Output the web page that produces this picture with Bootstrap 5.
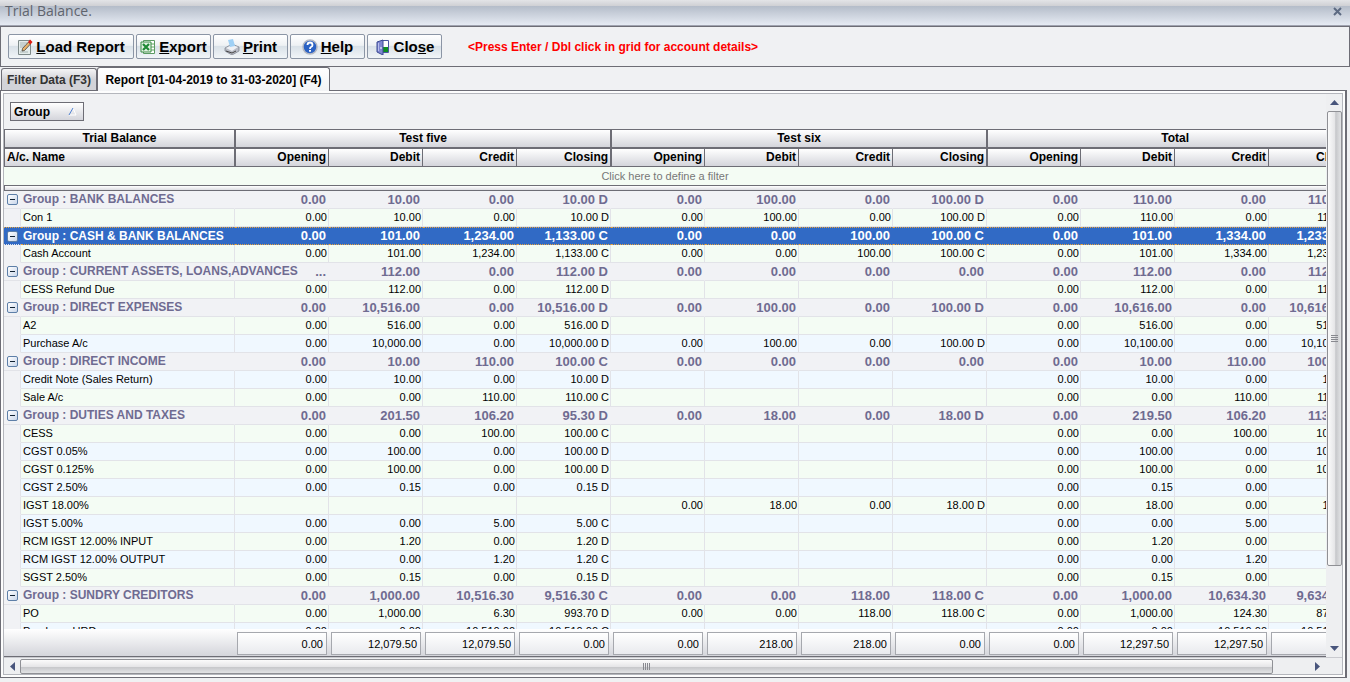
<!DOCTYPE html>
<html lang="en">
<head>
<meta charset="utf-8">
<meta name="viewport" content="width=device-width, initial-scale=1">
<title>Trial Balance</title>
<link rel="stylesheet" href="https://cdn.jsdelivr.net/npm/bootstrap@5.3.0/dist/css/bootstrap.min.css">
<style>
:root{--line:#6d6d75;--face:#f0f1f3;--soft:#e2e3e8}
body{background:var(--face);color:#000;font:12px/18px "Liberation Sans",Arial,sans-serif}
button{color:inherit;font:inherit}
.titlebar{height:26px;background:linear-gradient(#e3e4e7 0,#cfd0d4 6px,#b4bcc9 6px,#e6ebf3 25px,#a0a3b0 25px);color:#5f646e;padding-left:5px}
.titlebar h1{font:14px/22px "Open Sans","Noto Sans",sans-serif;margin:0}
.win-close{border:0;background:none}
.toolbar{height:41px;border:1px solid var(--line);gap:2px;padding:0 7px}
.tool{height:25px;border:1px solid #8b95a5;border-radius:2px;background:linear-gradient(#fff,#eef1f4 45%,#d9e1e8 50%,#f1f5f8);font-weight:700;font-size:15px;line-height:18px;padding:0 4px;gap:3px;white-space:nowrap}
.tool svg{width:16px;height:16px;flex:none}
.t1{width:126px}.t2{width:75px}
.hint{color:#f00;font-weight:700}
.tabs{height:23px;padding-left:1px;position:relative;z-index:1}
.tab-btn{border:1px solid var(--line);border-bottom:0;border-radius:3px 3px 0 0;font-weight:700;white-space:nowrap;padding:0 4px}
.tab-off{height:22px;background:linear-gradient(#f4f4f5,#d2d3d8 50%,#d2d3d8);color:#333;width:96px}
.tab-on{height:24px;background:linear-gradient(#fff,#f2f3f5);margin-bottom:-1px;width:233px}
.frame{min-height:0;border:1px solid var(--line);border-right-width:2px;margin:0 3px 4px 0;padding:2px;background:#fdfdfd}
.inner{border:1px solid #b4b6bc;background:var(--face)}
.groupbar{height:35px;padding:8px 6px}
.chip{width:74px;height:19px;border:1px solid var(--line);background:linear-gradient(#fff,#d4d5db);font-weight:700;padding:0 6px 0 3px}
.tgrid{table-layout:fixed;border-collapse:separate;border-spacing:0;width:1359px}
.tgrid td,.tgrid th{padding:0 2px;white-space:nowrap;text-align:right;line-height:17px;height:18px}
.tgrid tbody td{font-size:11px;padding-right:1px}
.ind{width:17px}.nm{width:214px}.num{width:94px}
.tgrid thead th{border-bottom:1px solid var(--line);border-right:1px solid var(--line);background:linear-gradient(#fff,#d4d5db);font-weight:700}
.tgrid thead tr:first-child th{border-top:1px solid var(--line);border-bottom-width:2px;height:20px;text-align:center}
.tgrid thead th:first-child,.tgrid thead .edge+th{border-left:1px solid var(--line)}
.tgrid thead .lft{text-align:left}
.filterline{height:18px;background:#f4fcf4;color:#777;border:0;font-size:11px}
.split{height:6px;border:1px solid var(--line);border-right:0;background:linear-gradient(#fff,#dcdde2)}
.tgrid tbody td{border-bottom:1px solid var(--soft);border-right:1px solid var(--soft)}
.tgrid tbody td:nth-child(2),.tgrid tbody td:first-child{text-align:left}
.odd td{background:#f4fcf4}.even td{background:#f0f8ff}
.tgrid tbody .ind{background:#f1f2f5;border-bottom-color:#f1f2f5}
.tgrid .grp td{background:#f1f2f5;color:#6f6b91;font-weight:700;font-size:13px;border-right-color:transparent;padding-right:2px}
.tgrid .grp td:nth-child(2){font-size:12px}
.tgrid .pick td{background:#316ac5;color:#fff;border-top:1px dotted #e8a33d;border-bottom:1px dotted #e8a33d;line-height:16px}
.tgrid .grp .ind{padding:0 0 0 3px;border-bottom-color:var(--soft)}
.fold{width:11px;height:11px;border:1px solid #5d7fa8;border-radius:2px;background:linear-gradient(135deg,#fff,#c9d6ea);padding:0;display:block}
.fold::before{content:"";display:block;width:5px;height:1px;margin:4px 2px;background:#123}
.sums{background:linear-gradient(#fff,#d4d5db);border-bottom:1px solid var(--line);height:28px}
.sumrow{width:1359px;padding:3px 0 0 231px}
.sumcell{width:90px;height:23px;margin:0 2px;border:1px solid #a6a8ae;background:linear-gradient(#fff,#e9eaee);font-size:11px;line-height:22px;padding:0 3px;text-align:right;flex:none}
.vbar{width:16px;background:#eeeff1;padding-left:1px}
.arrow{border:0;background:none;padding:0;width:15px;height:17px;line-height:0;flex:none}
.vthumb{flex:0 1 455px;border:1px solid #8f9095;border-radius:2px;background:linear-gradient(90deg,#fbfbfb,#e6e6e8 50%,#c6c7ca 60%,#e2e3e5)}
.hbar{height:17px;background:#eeeff1;border-top:1px solid #c9cacf;padding:0 17px 0 1px}
.hthumb{flex:0 1 1253px;border:1px solid #8f9095;border-radius:2px;background:linear-gradient(#fbfbfb,#e6e6e8 50%,#c6c7ca 55%,#e2e3e5);height:15px}
</style>
</head>
<body>
<main class="vh-100 d-flex flex-column overflow-hidden">
<header class="titlebar d-flex justify-content-between flex-shrink-0">
<h1>Trial Balance.</h1>
<button class="win-close p-0 pe-2" aria-label="Close window"><svg width="9" height="9" viewBox="0 0 9 9" class="d-block mb-1"><path d="M1 1l7 7M8 1L1 8" stroke="#5c6a82" stroke-width="2"/></svg></button>
</header>
<div class="toolbar d-flex align-items-center flex-shrink-0">
<button class="tool t1 d-flex align-items-center justify-content-center"><svg viewBox="0 0 16 16"><path d="M1.500 1.500h12v14h-12z" fill="#e4eceb" stroke="#7e8a8a"/><path d="M3 4h7M3 6h5M3 8h4M3 13h8" stroke="#a9b5b5"/><path d="M5 12l.5-2.500L11.500 3l2 2-6 6.500z" fill="#e8b26a" stroke="#444" stroke-width=".8"/><path d="M11 3l2-2.500L15.500 3l-2 2.500z" fill="#e01b12"/></svg><span><u>L</u>oad Report</span></button>
<button class="tool t2 d-flex align-items-center justify-content-center"><svg viewBox="0 0 16 16"><path d="M3.500 1.500h11v13h-11z" fill="#fff" stroke="#5b9a62"/><path d="M11 5h3M11 8h3M11 11h3" stroke="#5ca65c"/><path d="M1 3h10v10H1z" fill="#e5f3e4" stroke="#3b8b46"/><path d="M3 5l6 6M9 5l-6 6" stroke="#1f8a35" stroke-width="2.200"/></svg><span><u>E</u>xport</span></button>
<button class="tool t2 d-flex align-items-center justify-content-center"><svg viewBox="0 0 16 16"><path d="M1 9l7-4 7 3v4l-7 4-7-4z" fill="#b8bcc6" stroke="#777c88" stroke-width=".7"/><path d="M2 9l6-3 6 2-6 4z" fill="#eef0f4"/><path d="M2 12l6 2 4-2" stroke="#444" fill="none"/><path d="M4 1l5-1 2 7-5 1z" fill="#9fd0f5"/></svg><span><u>P</u>rint</span></button>
<button class="tool t2 d-flex align-items-center justify-content-center"><svg viewBox="0 0 16 16"><circle cx="8" cy="8" r="7" fill="#2b62c4" stroke="#b4b8c2" stroke-width="1.500"/><path d="M5.500 6q0-2.500 2.500-2.500T10.500 6q0 1.300-1.500 2-1 .5-1 2" fill="none" stroke="#fff" stroke-width="1.800"/><path d="M7 11h2v1.700H7z" fill="#fff"/></svg><span><u>H</u>elp</span></button>
<button class="tool t2 d-flex align-items-center justify-content-center"><svg viewBox="0 0 16 16"><path d="M6.500 1.500h7v12h-7z" fill="#fff" stroke="#4a55a0"/><path d="M8 8h5v5H8z" fill="#0d8f1f"/><path d="M2 3l6-2v15l-6-3z" fill="#7f86d0" stroke="#3a4a92"/><path d="M3.500 4v8" stroke="#b9c0ee"/><path d="M6 8v2" stroke="#fff"/></svg><span>Clo<u>s</u>e</span></button>
<span class="hint ms-4">&lt;Press Enter / Dbl click in grid for account details&gt;</span>
</div>
<div class="tabs d-flex align-items-end flex-shrink-0" role="tablist">
<button class="tab-btn tab-off" role="tab">Filter Data (F3)</button>
<button class="tab-btn tab-on" role="tab" aria-selected="true">Report [01-04-2019 to 31-03-2020] (F4)</button>
</div>
<section class="frame flex-grow-1 d-flex">
<div class="inner d-flex flex-column flex-grow-1 overflow-hidden">
<div class="d-flex flex-grow-1 overflow-hidden">
<div class="d-flex flex-column flex-grow-1 overflow-hidden">
<div class="groupbar flex-shrink-0"><button class="chip d-flex align-items-center justify-content-between">Group<svg width="9" height="9" viewBox="0 0 9 9"><path d="M5 1l3 7H1" fill="none" stroke="#fff"/><path d="M1 8L5 1" stroke="#4f80d0"/></svg></button></div>
<div class="flex-grow-1 overflow-hidden d-flex flex-column">
<div class="overflow-hidden flex-shrink-0"><table class="tgrid" id="heads"><colgroup><col class="ind"><col class="nm"></colgroup><thead></thead></table></div>
<button class="filterline flex-shrink-0 p-0">Click here to define a filter</button>
<div class="split flex-shrink-0"></div>
<div class="overflow-hidden flex-grow-1"><table class="tgrid" id="rows"><colgroup><col class="ind"><col class="nm"></colgroup><tbody></tbody></table></div>
</div>
<div class="sums overflow-hidden flex-shrink-0"><div class="sumrow d-flex" id="sums"></div></div>
</div>
<div class="vbar d-flex flex-column flex-shrink-0">
<button class="arrow" aria-label="Scroll up"><svg width="9" height="5"><path d="M0 5L4.500 0 9 5z" fill="#48557c"/></svg></button>
<div class="vthumb d-flex align-items-center justify-content-center"><svg width="7" height="8"><path d="M0 .5h7M0 2.500h7M0 4.500h7M0 6.500h7" stroke="#88898f"/></svg></div>
<div class="flex-grow-1"></div>
<button class="arrow" aria-label="Scroll down"><svg width="9" height="5"><path d="M0 0L4.500 5 9 0z" fill="#48557c"/></svg></button>
</div>
</div>
<div class="hbar d-flex align-items-center flex-shrink-0">
<button class="arrow" aria-label="Scroll left"><svg width="5" height="9"><path d="M5 0L0 4.500 5 9z" fill="#48557c"/></svg></button>
<div class="hthumb d-flex align-items-center justify-content-center"><svg width="8" height="7"><path d="M.5 0v7M2.500 0v7M4.500 0v7M6.500 0v7" stroke="#88898f"/></svg></div>
<div class="flex-grow-1"></div>
<button class="arrow" aria-label="Scroll right"><svg width="5" height="9"><path d="M0 0l5 4.500L0 9z" fill="#48557c"/></svg></button>
</div>
</div>
</section>
</main>
<script>
const z='0.00';
// name | twelve figures: opening, debit, credit, closing for each of the three blocks; * marks a group row
const data=[
'*BANK BALANCES|0.00|10.00|0.00|10.00 D|0.00|100.00|0.00|100.00 D|0.00|110.00|0.00|110.00 D',
'Con 1|0.00|10.00|0.00|10.00 D|0.00|100.00|0.00|100.00 D|0.00|110.00|0.00|110.00 D',
'*CASH & BANK BALANCES|0.00|101.00|1,234.00|1,133.00 C|0.00|0.00|100.00|100.00 C|0.00|101.00|1,334.00|1,233.00 C',
'Cash Account|0.00|101.00|1,234.00|1,133.00 C|0.00|0.00|100.00|100.00 C|0.00|101.00|1,334.00|1,233.00 C',
'*CURRENT ASSETS, LOANS,ADVANCES|...|112.00|0.00|112.00 D|0.00|0.00|0.00|0.00|0.00|112.00|0.00|112.00 D',
'CESS Refund Due|0.00|112.00|0.00|112.00 D|||||0.00|112.00|0.00|112.00 D',
'*DIRECT EXPENSES|0.00|10,516.00|0.00|10,516.00 D|0.00|100.00|0.00|100.00 D|0.00|10,616.00|0.00|10,616.00 D',
'A2|0.00|516.00|0.00|516.00 D|||||0.00|516.00|0.00|516.00 D',
'Purchase A/c|0.00|10,000.00|0.00|10,000.00 D|0.00|100.00|0.00|100.00 D|0.00|10,100.00|0.00|10,100.00 D',
'*DIRECT INCOME|0.00|10.00|110.00|100.00 C|0.00|0.00|0.00|0.00|0.00|10.00|110.00|100.00 C',
'Credit Note (Sales Return)|0.00|10.00|0.00|10.00 D|||||0.00|10.00|0.00|10.00 D',
'Sale A/c|0.00|0.00|110.00|110.00 C|||||0.00|0.00|110.00|110.00 C',
'*DUTIES AND TAXES|0.00|201.50|106.20|95.30 D|0.00|18.00|0.00|18.00 D|0.00|219.50|106.20|113.30 D',
'CESS|0.00|0.00|100.00|100.00 C|||||0.00|0.00|100.00|100.00 C',
'CGST 0.05%|0.00|100.00|0.00|100.00 D|||||0.00|100.00|0.00|100.00 D',
'CGST 0.125%|0.00|100.00|0.00|100.00 D|||||0.00|100.00|0.00|100.00 D',
'CGST 2.50%|0.00|0.15|0.00|0.15 D|||||0.00|0.15|0.00|0.15 D',
'IGST 18.00%|||||0.00|18.00|0.00|18.00 D|0.00|18.00|0.00|18.00 D',
'IGST 5.00%|0.00|0.00|5.00|5.00 C|||||0.00|0.00|5.00|5.00 C',
'RCM IGST 12.00% INPUT|0.00|1.20|0.00|1.20 D|||||0.00|1.20|0.00|1.20 D',
'RCM IGST 12.00% OUTPUT|0.00|0.00|1.20|1.20 C|||||0.00|0.00|1.20|1.20 C',
'SGST 2.50%|0.00|0.15|0.00|0.15 D|||||0.00|0.15|0.00|0.15 D',
'*SUNDRY CREDITORS|0.00|1,000.00|10,516.30|9,516.30 C|0.00|0.00|118.00|118.00 C|0.00|1,000.00|10,634.30|9,634.30 C',
'PO|0.00|1,000.00|6.30|993.70 D|0.00|0.00|118.00|118.00 C|0.00|1,000.00|124.30|875.70 D',
'Purchase URD|0.00|0.00|10,510.00|10,510.00 C|||||0.00|0.00|10,510.00|10,510.00 C'];
document.querySelectorAll('colgroup').forEach(c=>c.insertAdjacentHTML('beforeend','<col class="num">'.repeat(12)));
const cols=['Opening','Debit','Credit','Closing'];
document.querySelector('#heads thead').innerHTML=
'<tr><th colspan="2" class="edge">Trial Balance</th>'+['Test five','Test six','Total'].map(t=>`<th colspan="4" class="edge">${t}</th>`).join('')+'</tr>'+
'<tr><th colspan="2" class="edge lft">A/c. Name</th>'+[0,1,2].map(()=>cols.map((c,i)=>`<th class="${i==3?'edge':''}">${c}</th>`).join('')).join('')+'</tr>';
document.querySelector('#rows tbody').innerHTML=data.map((d,i)=>{
const p=d.replace('&','&amp;').split('|'),g=p[0][0]=='*';
const n=g?'Group : '+p[0].slice(1):p[0];
return `<tr class="${g?'grp'+(i==2?' pick':''):i%2?'odd':'even'}"><td class="ind">${g?'<button class="fold" aria-label="Collapse group"></button>':''}</td><td>${n}</td>${p.slice(1).map(v=>`<td>${v}</td>`).join('')}</tr>`}).join('');
document.querySelector('#sums').innerHTML=[z,'12,079.50','12,079.50',z,z,'218.00','218.00',z,z,'12,297.50','12,297.50',z].map(v=>`<div class="sumcell">${v}</div>`).join('');
</script>
<script src="https://cdn.jsdelivr.net/npm/bootstrap@5.3.0/dist/js/bootstrap.bundle.min.js"></script>
</body>
</html>
